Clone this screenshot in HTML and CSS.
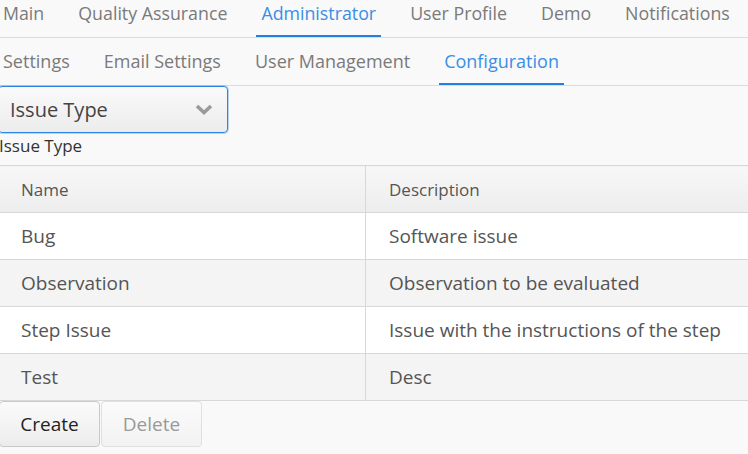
FILE: index.html
```html
<!DOCTYPE html>
<html>
<head>
<meta charset="utf-8">
<link rel="stylesheet" href="styles.css">
</head>
<body>
<nav class="tabs tabs-main">
  <span class="tab">Main</span>
  <span class="tab">Quality Assurance</span>
  <span class="tab active">Administrator</span>
  <span class="tab">User Profile</span>
  <span class="tab">Demo</span>
  <span class="tab">Notifications</span>
</nav>
<nav class="tabs tabs-sub">
  <span class="tab">Settings</span>
  <span class="tab">Email Settings</span>
  <span class="tab">User Management</span>
  <span class="tab active">Configuration</span>
</nav>
<div class="select">
  <span class="select-text">Issue Type</span>
  <svg class="chevron" width="18" height="11" viewBox="0 0 18 11"><path d="M2 2 L9 8.5 L16 2" fill="none" stroke="#9a9a9a" stroke-width="3.6" stroke-linecap="butt"/></svg>
</div>
<div class="label">Issue Type</div>
<table class="grid">
  <thead>
    <tr><th>Name</th><th>Description</th></tr>
  </thead>
  <tbody>
    <tr><td>Bug</td><td>Software issue</td></tr>
    <tr class="alt"><td>Observation</td><td>Observation to be evaluated</td></tr>
    <tr><td>Step Issue</td><td>Issue with the instructions of the step</td></tr>
    <tr class="alt"><td>Test</td><td>Desc</td></tr>
  </tbody>
</table>
<div class="actions">
  <button class="btn">Create</button>
  <button class="btn disabled">Delete</button>
</div>
</body>
</html>
```
FILE: styles.css
```css
html, body {
  margin: 0;
  padding: 0;
  background: #f9f9f9;
  font-family: "Open Sans", "DejaVu Sans", sans-serif;
  overflow: hidden;
}
.tabs {
  display: flex;
  gap: 24px;
  border-bottom: 1px solid #dcdcdc;
  margin-left: -2px;
}
.tab {
  padding: 0 5px;
  font-size: 17.8px;
  line-height: 24px;
  color: #7a7a7a;
  border-bottom: 2px solid transparent;
  white-space: nowrap;
}
.tabs-main .tab {
  padding-top: 1px;
  padding-bottom: 10px;
}
.tabs-sub .tab {
  font-size: 18px;
  padding-top: 11px;
  padding-bottom: 10px;
}
.tab.active {
  color: #3a8ee6;
  border-bottom-color: #2480e0;
}
.select {
  width: 230px;
  height: 47px;
  margin-left: -2px;
  box-sizing: border-box;
  border: 1px solid #2d86e3;
  border-radius: 4px;
  box-shadow: 0 0 0 1px rgba(60, 140, 230, 0.35);
  background: linear-gradient(#fafafa, #ececec);
  display: flex;
  align-items: center;
  justify-content: space-between;
  padding: 0 14px 0 11px;
}
.select-text {
  font-size: 20px;
  color: #444;
}
.label {
  font-size: 17px;
  color: #333;
  line-height: 24px;
  margin-top: 1px;
  margin-left: -1px;
}
.grid {
  width: 100%;
  border-collapse: collapse;
  margin-top: 7px;
  table-layout: fixed;
}
.grid th, .grid td {
  text-align: left;
  font-weight: normal;
  padding: 0 0 0 21px;
  height: 46px;
  border-top: 1px solid #d8d8d8;
  border-bottom: 1px solid #d8d8d8;
  white-space: nowrap;
}
.grid th:first-child, .grid td:first-child {
  width: 344px;
  border-right: 1px solid #d8d8d8;
}
.grid th:last-child, .grid td:last-child {
  padding-left: 23px;
}
.grid th {
  font-size: 17px;
  color: #555;
  background: linear-gradient(#f7f7f7, #ededed);
}
.grid td {
  font-size: 19px;
  color: #555;
  background: #fff;
}
.grid tr.alt td {
  background: #f4f4f4;
}
.actions {
  display: flex;
  gap: 1px;
  margin-top: 0;
}
.btn {
  width: 101px;
  height: 46px;
  font-family: "Open Sans", "DejaVu Sans", sans-serif;
  font-size: 19px;
  color: #222;
  border: 1px solid #c9c9c9;
  border-radius: 4px;
  background: linear-gradient(#fbfbfb, #ececec);
  padding: 0;
}
.btn:first-child {
  margin-left: -1px;
}
.btn.disabled {
  color: #999;
  border-color: #e0e0e0;
  background: linear-gradient(#fbfbfb, #f2f2f2);
}
```
